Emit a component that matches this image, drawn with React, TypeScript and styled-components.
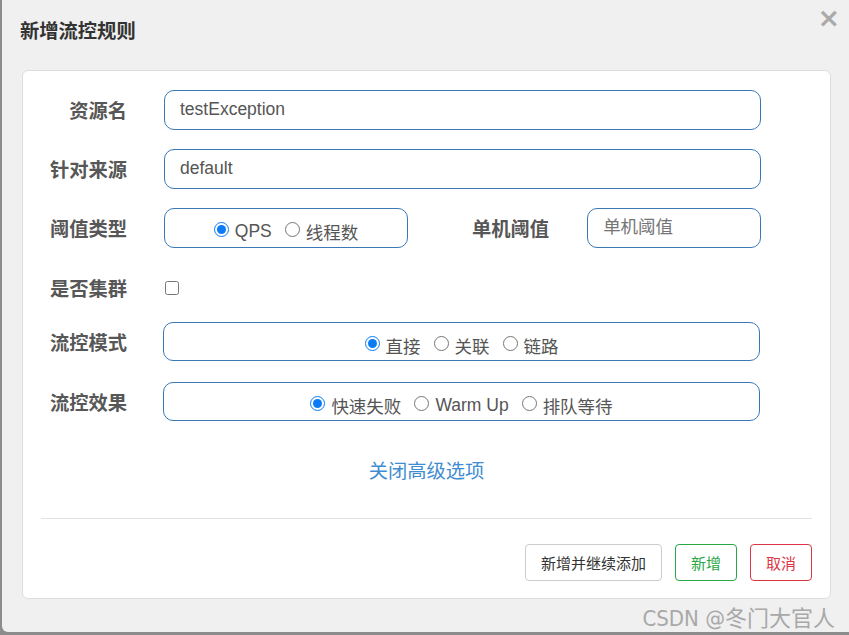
import React, { useState } from "react";
import styled, { createGlobalStyle } from "styled-components";

const FONT = `"Liberation Sans", Arial, "Noto Sans CJK SC", sans-serif`;

const GlobalStyle = createGlobalStyle`
  html, body {
    margin: 0;
    padding: 0;
    background: #8c8c8c;
  }
  body {
    font-family: ${FONT};
  }
  * {
    box-sizing: border-box;
  }
`;

type RadioOption = { label: string };

const RadioGroup = (props: {
  name: string;
  options: RadioOption[];
  initial?: number;
}) => {
  const [selected, setSelected] = useState(props.initial ?? 0);
  return (
    <>
      {props.options.map((o, i) => (
        <StyledRadioLabel key={o.label}>
          <StyledRadio
            type="radio"
            name={props.name}
            checked={i === selected}
            onChange={() => setSelected(i)}
          />
          {o.label}
        </StyledRadioLabel>
      ))}
    </>
  );
};

const App = () => {
  return (
    <>
      <GlobalStyle />
      <StyledPage>
        <StyledDialog>
          <StyledHeader>
            <StyledTitle>新增流控规则</StyledTitle>
            <StyledClose>×</StyledClose>
          </StyledHeader>
          <StyledCard>
            <StyledForm>
              <StyledRow>
                <StyledLabel>资源名</StyledLabel>
                <StyledInput defaultValue="testException" />
              </StyledRow>
              <StyledRow space={19}>
                <StyledLabel>针对来源</StyledLabel>
                <StyledInput defaultValue="default" />
              </StyledRow>
              <StyledRow space={19}>
                <StyledLabel>阈值类型</StyledLabel>
                <StyledRadioBox width={244}>
                  <RadioGroup
                    name="grade"
                    options={[{ label: "QPS" }, { label: "线程数" }]}
                  />
                </StyledRadioBox>
                <StyledInlineLabel>单机阈值</StyledInlineLabel>
                <StyledInput placeholder="单机阈值" width={174} />
              </StyledRow>
              <StyledRow space={20}>
                <StyledLabel>是否集群</StyledLabel>
                <StyledCheckbox type="checkbox" />
              </StyledRow>
              <StyledRow space={14}>
                <StyledLabel>流控模式</StyledLabel>
                <StyledRadioBox shift={-1}>
                  <RadioGroup
                    name="strategy"
                    options={[
                      { label: "直接" },
                      { label: "关联" },
                      { label: "链路" },
                    ]}
                  />
                </StyledRadioBox>
              </StyledRow>
              <StyledRow space={20}>
                <StyledLabel>流控效果</StyledLabel>
                <StyledRadioBox shift={-1}>
                  <RadioGroup
                    name="behavior"
                    options={[
                      { label: "快速失败" },
                      { label: "Warm Up" },
                      { label: "排队等待" },
                    ]}
                  />
                </StyledRadioBox>
              </StyledRow>
            </StyledForm>
            <StyledToggle>关闭高级选项</StyledToggle>
            <StyledDivider />
            <StyledFooter>
              <StyledButton tone="default">新增并继续添加</StyledButton>
              <StyledButton tone="success">新增</StyledButton>
              <StyledButton tone="danger">取消</StyledButton>
            </StyledFooter>
          </StyledCard>
          <StyledWatermark>CSDN @冬门大官人</StyledWatermark>
        </StyledDialog>
      </StyledPage>
    </>
  );
};

export default App;

const StyledPage = styled.div`
  width: 849px;
  height: 635px;
  padding: 0 0 3px 2px;
  overflow: hidden;
`;

const StyledDialog = styled.div`
  width: 100%;
  height: 100%;
  background: #f0f0f0;
  border-radius: 0 0 0 6px;
  padding: 0 18px 0 20px;
  display: flex;
  flex-direction: column;
`;

const StyledHeader = styled.div`
  height: 70px;
  display: flex;
  justify-content: space-between;
  align-items: flex-start;
  padding-top: 20px;
`;

const StyledTitle = styled.h4`
  margin: 0 0 0 -2px;
  font-size: 19.3px;
  font-weight: bold;
  color: #333;
  line-height: 24px;
`;

const StyledClose = styled.span`
  margin-top: -16px;
  margin-right: -9px;
  font-size: 27px;
  font-weight: bold;
  color: #aaa;
  font-family: "DejaVu Sans", sans-serif;
  line-height: 27px;
`;

const StyledCard = styled.div`
  background: #fff;
  border: 1px solid #ddd;
  border-radius: 6px;
  height: 531px;
  padding: 19px 18px 0;
  display: flex;
  flex-direction: column;
`;

const StyledForm = styled.div`
  display: flex;
  flex-direction: column;
`;

const StyledRow = styled.div<{ space?: number }>`
  height: 40px;
  margin-top: ${(p) => p.space ?? 0}px;
  display: flex;
  align-items: center;
`;

const StyledLabel = styled.label`
  width: 86px;
  margin-right: 37px;
  text-align: right;
  font-size: 19.3px;
  font-weight: bold;
  color: #575757;
  white-space: nowrap;
`;

const StyledInlineLabel = styled(StyledLabel)`
  width: auto;
  margin: 0 38px 0 64px;
`;

const StyledInput = styled.input<{ width?: number }>`
  width: ${(p) => (p.width ? `${p.width}px` : "597px")};
  height: 40px;
  border: 1px solid #3a78b8;
  border-radius: 10px;
  padding: 0 15px;
  font-family: ${FONT};
  font-size: 17.5px;
  color: #555;
  outline: none;

  ::placeholder {
    color: #999;
  }
`;

const StyledRadioBox = styled.div<{ width?: number; shift?: number }>`
  width: ${(p) => (p.width ? `${p.width}px` : "597px")};
  height: ${(p) => (p.shift ? "39px" : "40px")};
  margin-left: ${(p) => p.shift ?? 0}px;
  border: 1px solid #3a78b8;
  border-radius: 10px;
  display: flex;
  justify-content: center;
  align-items: center;
  gap: 13px;
  padding-top: 7px;
  font-size: 17.5px;
  color: #555;
`;

const StyledRadioLabel = styled.label`
  display: flex;
  align-items: center;
  gap: 6px;
`;

const StyledRadio = styled.input`
  margin: 0 0 3px;
  width: 15px;
  height: 15px;
  accent-color: #0a7bf5;
`;

const StyledCheckbox = styled.input`
  margin: 0 0 0 1px;
  width: 14px;
  height: 14px;
`;

const StyledToggle = styled.a`
  margin-top: 37px;
  text-align: center;
  font-size: 19.3px;
  color: #3f8dd0;
  cursor: pointer;
  line-height: 26px;
`;

const StyledDivider = styled.hr`
  margin: 33px 0 0;
  border: none;
  border-top: 1px solid #e3e3e3;
`;

const TONES = {
  default: { color: "#333", border: "#ccc" },
  success: { color: "#28a745", border: "#28a745" },
  danger: { color: "#dc3545", border: "#dc3545" },
};

const StyledButton = styled.button<{ tone: keyof typeof TONES }>`
  height: 37px;
  padding: 0 15px;
  background: #fff;
  border: 1px solid ${(p) => TONES[p.tone].border};
  border-radius: 4px;
  color: ${(p) => TONES[p.tone].color};
  font-family: ${FONT};
  font-size: 15px;
  cursor: pointer;
`;

const StyledFooter = styled.div`
  margin-top: 25px;
  display: flex;
  justify-content: flex-end;
  gap: 13px;
`;

const StyledWatermark = styled.div`
  margin-top: 1px;
  align-self: flex-end;
  margin-right: -4px;
  font-size: 22px;
  color: #a8a8a8;
  font-family: "DejaVu Sans Condensed", "Noto Sans CJK SC", sans-serif;
`;
